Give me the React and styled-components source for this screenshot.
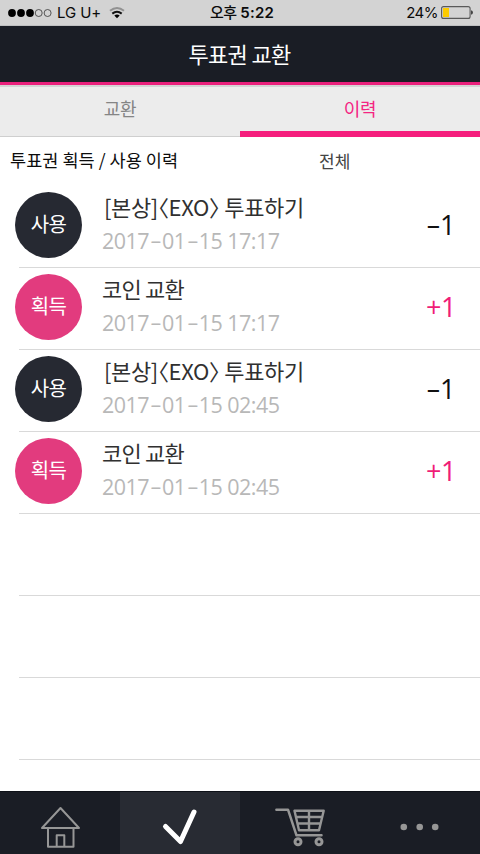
import React from 'react';
import styled, { createGlobalStyle } from 'styled-components';

const GlobalStyle = createGlobalStyle`
  * { box-sizing: border-box; }
  body { margin: 0; background: #fff; }
`;

const korean = '"Noto Sans CJK KR", sans-serif';
const latin = '"Open Sans", "Noto Sans CJK KR", sans-serif';

const Screen = styled.div`
  width: 480px;
  height: 854px;
  display: flex;
  flex-direction: column;
  overflow: hidden;
  background: #fff;
  font-family: ${korean};
  white-space: nowrap;
`;

const StatusBar = styled.div`
  flex: none;
  height: 26px;
  display: grid;
  grid-template-columns: 1fr auto 1fr;
  align-items: center;
  padding: 0 7px 0 8px;
  border-bottom: 1px solid #bfc0c1;
  background: #d3d3d3;
  color: #0b0b0b;
  font: 15px/25px Inter, ${korean};
`;

const Carrier = styled.div`
  display: flex;
  align-items: center;
  height: 25px;
  letter-spacing: -0.1px;
  span { margin: 0 8px 0 5px; }
`;

const Clock = styled.div`
  font-weight: 600;
  font-size: 15px;
  letter-spacing: 0.2px;
  padding-left: 3px;
  span { font-weight: 500; letter-spacing: -0.6px; }
`;

const Battery = styled.div`
  display: flex;
  align-items: center;
  justify-content: flex-end;
  gap: 3px;
  letter-spacing: -0.5px;
`;

const Header = styled.header`
  flex: none;
  height: 59px;
  padding: 0 1px 1px 0;
  border-bottom: 3px solid #e9207c;
  background: #1a1d25;
  color: #fff;
  text-align: center;
  font-size: 22px;
  line-height: 55px;
  letter-spacing: -0.7px;
`;

const Tabs = styled.nav`
  flex: none;
  height: 52px;
  display: grid;
  grid-template-columns: 1fr 1fr;
  border-top: 2px solid #d3d3d3;
  background: #ececec;
`;

const Tab = styled.div`
  text-align: center;
  font-size: 18px;
  line-height: 42px;
  letter-spacing: -0.4px;
  color: ${(p) => (p.$active ? '#f42583' : '#858585')};
  border-bottom: ${(p) => (p.$active ? '6px solid #f51e7d' : '1px solid #cfcfcf')};
`;

const Filter = styled.div`
  flex: none;
  height: 49px;
  display: grid;
  grid-template-columns: 309px 1fr;
  padding-left: 10px;
  line-height: 46px;
  font-size: 17.5px;
  letter-spacing: 0.05px;
  color: #0c0c0c;
`;

const FilterValue = styled.span`
  font-size: 17px;
  line-height: 47px;
  color: #444;
`;

const List = styled.main`
  flex: 1;
  min-height: 0;
  padding-left: 19px;
  overflow: hidden;
`;

const Row = styled.div`
  height: 82px;
  display: flex;
  align-items: center;
  border-bottom: 1px solid #d9d9d9;
`;

const Badge = styled.div`
  flex: none;
  width: 67px;
  height: 66px;
  margin-left: -4px;
  margin-top: -4px;
  border-radius: 50%;
  background: ${(p) => (p.$earned ? '#e23b7e' : '#262932')};
  color: #fff;
  text-align: center;
  font-size: 20px;
  line-height: 64px;
  letter-spacing: -0.6px;
`;

const Details = styled.div`
  flex: 1;
  height: 81px;
  padding: 3px 0 0 20px;
`;

const Name = styled.div`
  height: 36px;
  padding-left: ${(p) => (p.$bracketed ? '2px' : '0')};
  font-size: 22px;
  line-height: 34px;
  letter-spacing: ${(p) => (p.$bracketed ? '-0.35px' : '-0.8px')};
  font-feature-settings: 'halt';
  color: #303030;
`;

const DateText = styled.div`
  font: 400 21.5px/32px ${latin};
  letter-spacing: -0.52px;
  color: #b8b8b8;
`;

const Dash = styled.span`
  display: inline-block;
  width: ${(p) => p.$width};
  text-align: center;
  transform: translateY(-1.5px) scaleX(1.7);
`;

const Amount = styled.div`
  width: 54px;
  padding-bottom: 4px;
  font: 400 27px/40px ${latin};
  letter-spacing: -0.5px;
  color: ${(p) => (p.$earned ? '#f01d77' : '#111')};
`;

const BottomBar = styled.footer`
  flex: none;
  height: 63px;
  display: grid;
  grid-template-columns: repeat(4, 1fr);
  border-top: 1px solid #0e1118;
  background: #1a1d25;
`;

const BottomItem = styled.div`
  background: ${(p) => (p.$active ? '#282b33' : 'transparent')};
  svg { display: block; }
`;

const entries = [
  { type: '사용', name: '[본상]〈EXO〉 투표하기', date: '2017-01-15 17:17', amount: '-1' },
  { type: '획득', name: '코인 교환', date: '2017-01-15 17:17', amount: '+1' },
  { type: '사용', name: '[본상]〈EXO〉 투표하기', date: '2017-01-15 02:45', amount: '-1' },
  { type: '획득', name: '코인 교환', date: '2017-01-15 02:45', amount: '+1' },
];

const withDashes = (text, width) =>
  text.split(/(-)/).map((part, i) => (part === '-' ? <Dash key={i} $width={width}>-</Dash> : part));

const SignalDots = () => (
  <svg width="44" height="10" fill="#000">
    {[4, 13, 22].map((x) => <circle key={x} cx={x} cy="5" r="3.9" />)}
    {[30.7, 39.6].map((x) => <circle key={x} cx={x} cy="5" r="3.5" fill="none" stroke="#333" strokeWidth="0.8" />)}
  </svg>
);

const Wifi = () => (
  <svg width="16" height="13" fill="none" strokeWidth="2">
    <path d="M1 4.8Q8-0.8 15 4.8" stroke="#929292" />
    <path d="M3.3 7.6Q8 3.8 12.7 7.6" stroke="#111" />
    <path d="M5.3 9.6Q8 7.5 10.7 9.6L8 12.2Z" fill="#000" />
  </svg>
);

const BatteryIcon = () => (
  <svg width="32" height="13">
    <rect x=".6" y=".6" width="28.5" height="11.8" rx="2" fill="none" stroke="#595959" strokeWidth="1.1" />
    <rect x="2" y="2" width="6" height="9" fill="#fdcb00" />
    <path d="M30 4.2Q32 4.5 32 6.5T30 8.8Z" fill="#444" />
  </svg>
);

const HomeIcon = () => (
  <svg width="120" height="62" fill="none" stroke="#969696" strokeWidth="2" strokeLinejoin="round">
    <path d="M60.5 16L42 36H79Z M48 36.2V54.7H73.5V36.2 M56.7 54.5V43.2H64.3V54.5" />
  </svg>
);

const CheckIcon = () => (
  <svg width="120" height="62" fill="none" stroke="#fff" strokeWidth="5" strokeLinecap="round" strokeLinejoin="round">
    <path d="M45.5 34.5L60.5 49.5L74 20" />
  </svg>
);

const CartIcon = () => (
  <svg width="120" height="62" fill="none" stroke="#969696" strokeWidth="2.5" strokeLinecap="round" strokeLinejoin="round">
    <path d="M36.4 17.7H48L56.5 43.3H81.5" />
    <path d="M54.5 18.7H83.7L79 38.3H59Z M56 25H82 M58 31.5H80.5 M69 19V38" strokeWidth="2.4" />
    <circle cx="58" cy="49.7" r="3" strokeWidth="3" />
    <circle cx="79" cy="49.7" r="3" strokeWidth="3" />
  </svg>
);

const MoreIcon = () => (
  <svg width="120" height="62" fill="#969696">
    {[43.8, 59.7, 75.2].map((x) => <circle key={x} cx={x} cy="35" r="3.3" />)}
  </svg>
);

export default function App() {
  return (
    <Screen>
      <GlobalStyle />
      <StatusBar>
        <Carrier><SignalDots /><span>LG U+</span><Wifi /></Carrier>
        <Clock><span>오후</span> 5:22</Clock>
        <Battery>24%<BatteryIcon /></Battery>
      </StatusBar>
      <Header>투표권 교환</Header>
      <Tabs>
        <Tab>교환</Tab>
        <Tab $active>이력</Tab>
      </Tabs>
      <Filter>
        <span>투표권 획득 / 사용 이력</span>
        <FilterValue>전체</FilterValue>
      </Filter>
      <List>
        {entries.map((entry, i) => {
          const earned = entry.type === '획득';
          return (
            <Row key={i}>
              <Badge $earned={earned}>{entry.type}</Badge>
              <Details>
                <Name $bracketed={entry.name.startsWith('[')}>{entry.name}</Name>
                <DateText>{withDashes(entry.date, '13px')}</DateText>
              </Details>
              <Amount $earned={earned}>{withDashes(entry.amount, '14px')}</Amount>
            </Row>
          );
        })}
        <Row /><Row /><Row />
      </List>
      <BottomBar>
        <BottomItem><HomeIcon /></BottomItem>
        <BottomItem $active><CheckIcon /></BottomItem>
        <BottomItem><CartIcon /></BottomItem>
        <BottomItem><MoreIcon /></BottomItem>
      </BottomBar>
    </Screen>
  );
}
